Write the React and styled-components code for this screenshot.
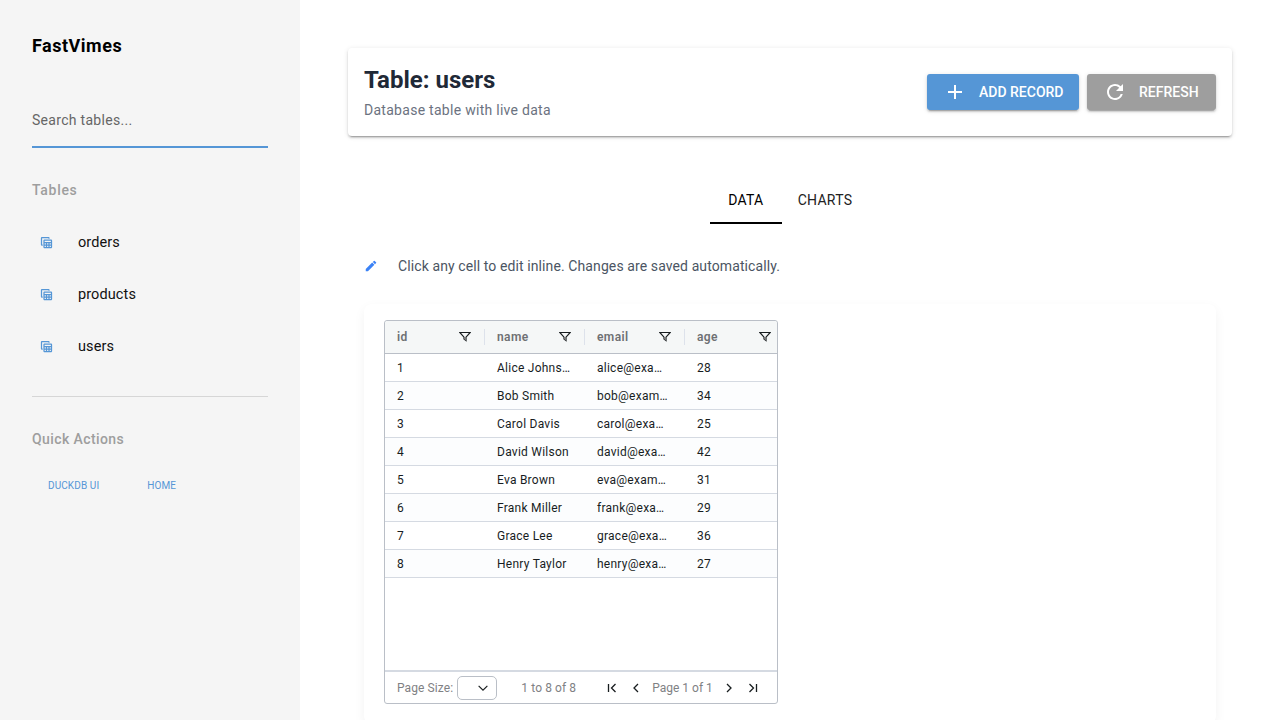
import React from "react";
import styled, { createGlobalStyle } from "styled-components";
import { MdAdd, MdRefresh, MdEdit, MdTableView } from "react-icons/md";

const Global = createGlobalStyle`
  html, body { margin: 0; padding: 0; height: 100%; overflow: hidden; background: #fff; }
  body { font-family: Roboto, "Liberation Sans", sans-serif; }
  * { box-sizing: border-box; }
`;
const Shell = styled.div`display: flex; width: 1280px; height: 720px; overflow: hidden;`;
const Sidebar = styled.aside`width: 300px; flex: none; background: #f5f5f5; padding: 32px 32px 0; display: flex; flex-direction: column;`;
const Brand = styled.div`font-size: 18px; line-height: 28px; font-weight: 700; color: #000; letter-spacing: 0.5px;`;
const Search = styled.div`margin-top: 40px; height: 48px; border-bottom: 2px solid #5596d6; font-size: 14px; letter-spacing: 0.3px; color: #666; display: flex; align-items: center; padding-bottom: 6px;`;
const SectionLabel = styled.div`font-size: 14px; line-height: 20px; font-weight: 500; color: #9e9e9e; letter-spacing: ${p => p.$ls}px; margin-top: 32px;`;
const NavList = styled.div`margin-top: 16px; display: flex; flex-direction: column;`;
const NavItem = styled.div`height: 52px; display: flex; align-items: center; font-size: 14.5px; letter-spacing: 0.1px; color: #111; padding-left: 7px; gap: 24px; svg { color: #5596d6; flex: none; }`;
const Divider = styled.div`height: 1px; background: #d6d6d6; margin-top: 24px;`;
const Actions = styled.div`margin-top: 27px; display: flex; padding-left: 16px; gap: 48px;`;
const LinkBtn = styled.div`font-size: 10px; line-height: 20px; color: #5596d6; font-weight: 400; letter-spacing: 0.1px;`;

const Main = styled.main`flex: 1; padding: 48px 48px 0; min-width: 0;`;
const HeaderCard = styled.section`height: 88px; border-radius: 4px; background: #fff; box-shadow: 0 3px 1px -2px rgba(0,0,0,.2), 0 2px 2px rgba(0,0,0,.14), 0 1px 5px rgba(0,0,0,.12); display: flex; align-items: center; justify-content: space-between; padding: 0 16px;`;
const Title = styled.h1`margin: 0; font-size: 24px; line-height: 32px; font-weight: 700; color: #1f2937;`;
const Subtitle = styled.div`font-size: 14px; line-height: 20px; color: #6b7280; letter-spacing: 0.28px; margin-top: 4px;`;
const Buttons = styled.div`display: flex; gap: 8px;`;
const Button = styled.div`width: ${p => p.$w}px; height: 36px; border-radius: 3px; background: ${p => p.$bg}; color: #fff; display: flex; align-items: center; padding-left: 16px; gap: 12px; font-size: 14px; font-weight: 500; white-space: nowrap; box-shadow: 0 3px 1px -2px rgba(0,0,0,.2), 0 2px 2px rgba(0,0,0,.14), 0 1px 5px rgba(0,0,0,.12);`;
const Tabs = styled.div`margin-top: 40px; height: 48px; display: flex; justify-content: center; padding-right: 2px;`;
const Tab = styled.div`min-width: 72px; height: 48px; padding: 2px 16px 0; display: flex; align-items: center; justify-content: center; font-size: 14px; font-weight: 450; letter-spacing: 0.25px; color: ${p => p.$on ? "#000" : "#222"}; border-bottom: 2px solid ${p => p.$on ? "#000" : "transparent"};`;
const Note = styled.div`margin-top: 32px; margin-left: 16px; height: 20px; display: flex; align-items: center; gap: 20px; font-size: 14px; letter-spacing: 0.1px; color: #4b5563; svg { color: #3b82f6; flex: none; }`;
const DataCard = styled.section`margin: 28px 16px 0; padding: 16px 20px 20px; background: #fff; border-radius: 8px; box-shadow: 0 4px 12px rgba(0,0,0,.05);`;
const Grid = styled.div`width: 394px; height: 384px; border: 1px solid #babfc7; border-radius: 3px; display: flex; flex-direction: column; font-size: 12px; letter-spacing: 0.25px; color: #181d1f;`;
const HeadRow = styled.div`height: 33px; flex: none; background: #f5f7f7; border-bottom: 1px solid #babfc7; display: flex; border-radius: 3px 3px 0 0;`;
const HeadCell = styled.div`width: 100px; flex: none; position: relative; display: flex; align-items: center; justify-content: space-between; padding: 0 14px 0 12px; font-weight: 600; letter-spacing: 0.4px; color: #6e7073; &:nth-child(n+2)::before { content: ""; position: absolute; left: -1px; top: 8px; height: 16px; width: 1px; background: #dde2eb; }`;
const Body = styled.div`flex: 1;`;
const Row = styled.div`height: 28px; display: flex; align-items: center; border-bottom: 1px solid #d5dae2; background: ${p => p.$odd ? "#fcfdfe" : "#fff"};`;
const Cell = styled.div`width: 100px; flex: none; padding: 0 ${p => p.$right}px 0 12px; white-space: nowrap; overflow: hidden; text-overflow: ellipsis;`;
const Footer = styled.div`height: 33px; flex: none; border-top: 2px solid #d5dae2; display: flex; align-items: center; padding-left: 12px; letter-spacing: 0.1px; color: #7f8184;`;
const SizeSelect = styled.div`width: 40px; height: 24px; margin-left: 4px; border: 1px solid #babfc7; border-radius: 5px; display: flex; align-items: center; justify-content: flex-end; padding-right: 6px;`;
const Count = styled.span`margin-left: 24px;`;
const Pager = styled.div`margin-left: 28px; display: flex; align-items: center; gap: 8px;`;
const PageLabel = styled.span`letter-spacing: 0;`;
const PageBtn = styled.svg`width: 16px; height: 16px; fill: none; stroke: #181d1f; stroke-width: 1.3;`;
const CaretBtn = styled(PageBtn)`width: 14px; height: 14px;`;

const FilterIcon = () => (
  <svg width="12" height="12" viewBox="0 0 12 12">
    <path d="M0.8 1.5h10.4L7 6.2v3.3L5 8V6.2z" fill="none" stroke="#181d1f" strokeWidth="1.2" />
    <path d="M5 6h2v3.5L5 8z" fill="#777" />
  </svg>
);
const Chevron = ({ d }) => <PageBtn viewBox="0 0 16 16"><path d={d} /></PageBtn>;

const rows = [
  ["1", "Alice Johnson", "alice@example.com", "28"],
  ["2", "Bob Smith", "bob@example.com", "34"],
  ["3", "Carol Davis", "carol@example.com", "25"],
  ["4", "David Wilson", "david@example.com", "42"],
  ["5", "Eva Brown", "eva@example.com", "31"],
  ["6", "Frank Miller", "frank@example.com", "29"],
  ["7", "Grace Lee", "grace@example.com", "36"],
  ["8", "Henry Taylor", "henry@example.com", "27"],
];

export default function App() {
  return (
    <Shell>
      <Global />
      <Sidebar>
        <Brand>FastVimes</Brand>
        <Search>Search tables...</Search>
        <SectionLabel $ls={0.7}>Tables</SectionLabel>
        <NavList>
          {["orders", "products", "users"].map(t => (
            <NavItem key={t}><MdTableView size={15} />{t}</NavItem>
          ))}
        </NavList>
        <Divider />
        <SectionLabel $ls={0.4}>Quick Actions</SectionLabel>
        <Actions><LinkBtn>DUCKDB UI</LinkBtn><LinkBtn>HOME</LinkBtn></Actions>
      </Sidebar>
      <Main>
        <HeaderCard>
          <div>
            <Title>Table: users</Title>
            <Subtitle>Database table with live data</Subtitle>
          </div>
          <Buttons>
            <Button $bg="#5596d6" $w={152}><MdAdd size={24} />ADD RECORD</Button>
            <Button $bg="#9e9e9e" $w={129}><MdRefresh size={24} />REFRESH</Button>
          </Buttons>
        </HeaderCard>
        <Tabs><Tab $on>DATA</Tab><Tab>CHARTS</Tab></Tabs>
        <Note><MdEdit size={14} />Click any cell to edit inline. Changes are saved automatically.</Note>
        <DataCard>
          <Grid>
            <HeadRow>
              {["id", "name", "email", "age"].map(h => (
                <HeadCell key={h}>{h}<FilterIcon /></HeadCell>
              ))}
            </HeadRow>
            <Body>
              {rows.map((r, i) => (
                <Row key={r[0]} $odd={i % 2 === 1}>
                  {r.map((c, j) => <Cell key={j} $right={j === 2 ? 16 : 12}>{c}</Cell>)}
                </Row>
              ))}
            </Body>
            <Footer>
              Page Size:
              <SizeSelect><CaretBtn viewBox="0 0 16 16"><path d="M3 5.5l5 5 5-5" /></CaretBtn></SizeSelect>
              <Count>1 to 8 of 8</Count>
              <Pager>
                <Chevron d="M4.5 4v8M11.5 4L7.5 8l4 4" />
                <Chevron d="M10 4L6 8l4 4" />
                <PageLabel>Page 1 of 1</PageLabel>
                <Chevron d="M6 4l4 4-4 4" />
                <Chevron d="M4.5 4l4 4-4 4M11.5 4v8" />
              </Pager>
            </Footer>
          </Grid>
        </DataCard>
      </Main>
    </Shell>
  );
}
